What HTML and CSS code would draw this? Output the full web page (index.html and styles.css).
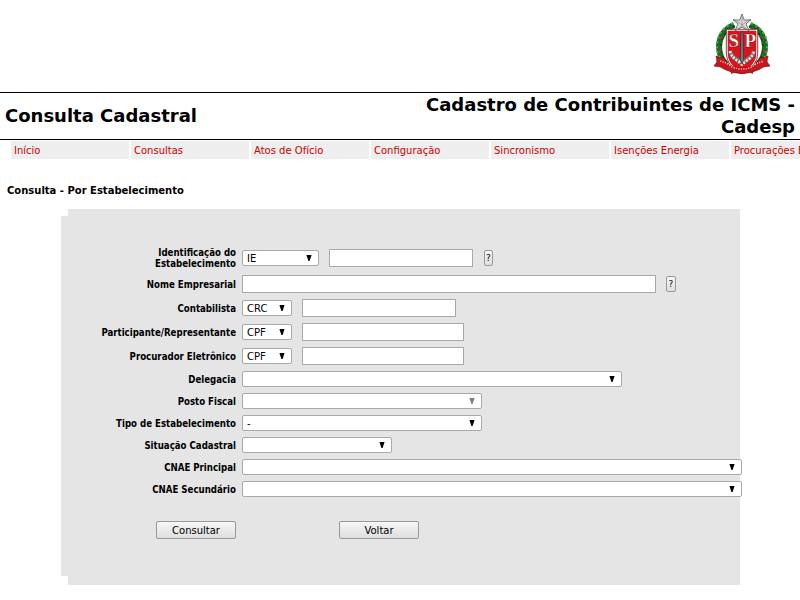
FILE: index.html
```html
<!DOCTYPE html>
<html lang="pt-BR">
<head>
<meta charset="utf-8">
<title>Consulta Cadastral</title>
<link rel="stylesheet" href="styles.css">
</head>
<body>
<header class="top">
<svg class="crest" width="60" height="66" viewBox="0 0 60 66">
<g fill="none" stroke="#176b27" stroke-width="6"><path d="M21 12Q7 18 6 33Q6 45 14 52M37 12Q51 18 52 33Q52 45 44 52"/></g>
<g fill="none" stroke="#4fae50" stroke-width="2" stroke-dasharray="2 3"><path d="M20 10Q4 17 4 33Q4 45 13 52M38 10Q54 17 54 33Q54 45 45 52"/></g>
<g fill="none" stroke="#073f16" stroke-width="1.5" stroke-dasharray="2 4"><path d="M22 13Q9 18 8 33Q8 45 15 51M36 13Q49 18 50 33Q50 45 43 51"/></g>
<g fill="#c9232b"><circle cx="8" cy="25" r="1.3"/><circle cx="50" cy="25" r="1.3"/><circle cx="7" cy="38" r="1.3"/><circle cx="51" cy="38" r="1.3"/></g>
<path d="M14 17h30v23q0 13-15 19Q14 53 14 40z" fill="#d9141c" stroke="#fff" stroke-width="1.4"/>
<path d="M13.3 16.3h31.4v24q0 13-15.7 19.5Q13.3 53 13.3 40z" fill="none" stroke="#631318" stroke-width=".8"/>
<g fill="none" stroke="#777" stroke-width="4"><path d="M17 38q2 8 12 11q10-3 12-11"/></g>
<g fill="none" stroke="#e4e4e4" stroke-width="2.4" stroke-dasharray="2 1.5"><path d="M17 38q2 9 12 11q10-2 12-11M20 44l9 8 9-8"/></g>
<path d="M28 20l1-2 1 2 .7 27L29 51l-1.7-4z" fill="#777" stroke="#222" stroke-width=".6"/>
<text class="crest-letter" x="15.6" y="34">S</text><text class="crest-letter" x="31.5" y="34">P</text>
<path d="M29 1l2.2 6.2 6.8-.5-5 4.2 3 7-7-3.8-7 3.8 3-7-5-4.2 6.8.5z" fill="#ddd" stroke="#555" stroke-width=".8"/>
<path d="M29 2v11l-6 4M29 12l7-5M29 12l6 5M29 12l-7-5" fill="none" stroke="#888" stroke-width=".7"/>
<path d="M3 43q3 2 8 2l5 7q13 6 26 0l5-7q5 0 8-2-1 4-1 6l3 4q-7 0-10 3-18 9-36 0-3-3-10-3l3-4q0-3-1-6z" fill="#c5171d" stroke="#851015" stroke-width=".8"/>
<path d="M7 48q8 2 12 6 10 4 20 0 4-4 12-6" fill="none" stroke="#ffb9b9" stroke-width="1.6" stroke-dasharray="1.2 1.3"/>
<path d="M18 60l6-3M40 60l-6-3M26 60h6" stroke="#ad2020" stroke-width="2"/>
</svg>
</header>
<div class="titlebar"><h1>Consulta Cadastral</h1><div class="system">Cadastro de Contribuintes de ICMS -<br>Cadesp</div></div>
<nav class="menu"><a>Início</a><a>Consultas</a><a>Atos de Ofício</a><a>Configuração</a><a>Sincronismo</a><a>Isenções Energia</a><a>Procurações Eletrônicas</a></nav>
<h2>Consulta - Por Estabelecimento</h2>
<main class="shadow"><form class="panel">
<div class="row first"><label>Identificação do<br>Estabelecimento</label><span class="select w77"><select><option>IE</option></select><svg viewBox="0 0 6 7"><path d="M0 0h6L3.7 7H2.3z"/></svg></span><input class="w144"><button type="button" class="help narrow">?</button></div>
<div class="row tall"><label>Nome Empresarial</label><input class="w414"><button type="button" class="help">?</button></div>
<div class="row tall"><label>Contabilista</label><span class="select w50"><select><option>CRC</option></select><svg viewBox="0 0 6 7"><path d="M0 0h6L3.7 7H2.3z"/></svg></span><input class="w154"></div>
<div class="row tall"><label>Participante/Representante</label><span class="select w50"><select><option>CPF</option></select><svg viewBox="0 0 6 7"><path d="M0 0h6L3.7 7H2.3z"/></svg></span><input class="w162"></div>
<div class="row tall"><label>Procurador Eletrônico</label><span class="select w50"><select><option>CPF</option></select><svg viewBox="0 0 6 7"><path d="M0 0h6L3.7 7H2.3z"/></svg></span><input class="w162"></div>
<div class="row"><label>Delegacia</label><span class="select w380"><select></select><svg viewBox="0 0 6 7"><path d="M0 0h6L3.7 7H2.3z"/></svg></span></div>
<div class="row"><label>Posto Fiscal</label><span class="select w240 off"><select disabled></select><svg viewBox="0 0 6 7"><path d="M0 0h6L3.7 7H2.3z"/></svg></span></div>
<div class="row"><label>Tipo de Estabelecimento</label><span class="select w240"><select><option>-</option></select><svg viewBox="0 0 6 7"><path d="M0 0h6L3.7 7H2.3z"/></svg></span></div>
<div class="row"><label>Situação Cadastral</label><span class="select w150"><select></select><svg viewBox="0 0 6 7"><path d="M0 0h6L3.7 7H2.3z"/></svg></span></div>
<div class="row"><label>CNAE Principal</label><span class="select w500"><select></select><svg viewBox="0 0 6 7"><path d="M0 0h6L3.7 7H2.3z"/></svg></span></div>
<div class="row"><label>CNAE Secundário</label><span class="select w500"><select></select><svg viewBox="0 0 6 7"><path d="M0 0h6L3.7 7H2.3z"/></svg></span></div>
<div class="actions"><button type="button">Consultar</button><button type="button">Voltar</button></div>
</form></main>
</body>
</html>
```
FILE: styles.css
```css
* { box-sizing: border-box; }
body { margin: 0; width: 800px; height: 600px; overflow: hidden; background: #fff; color: #000; font-family: "DejaVu Sans", sans-serif; font-size: 10px; }
.top { height: 92px; display: flex; justify-content: flex-end; padding: 13px 27px 0 0; }
.crest-letter { font: bold 19px "Liberation Serif", serif; fill: #fff; stroke: #650b10; stroke-width: .4px; }
.titlebar { height: 48px; border: solid #000; border-width: 1px 0; display: flex; justify-content: space-between; align-items: center; padding: 0 5px; font-size: 18px; font-weight: bold; line-height: 22px; }
h1 { margin: 0; font-size: 18px; }
.system { text-align: right; }
.menu { display: flex; gap: 2px; margin: 1px 0 0 11px; width: 789px; overflow: hidden; }
.menu a { flex: 0 0 118px; height: 18px; padding-left: 3px; line-height: 19px; background: #eee; color: #c00; white-space: nowrap; overflow: hidden; }
h2 { margin: 24px 0 0 7px; height: 26px; font-size: 10px; line-height: 15px; }
.shadow { margin: 7px 0 0 61px; width: 672px; height: 360px; background: #e5e5e5; padding-left: 7px; }
.panel { width: 672px; height: 376px; margin-top: -7px; padding-top: 37px; background: #e5e5e5; }
.shadow { display: flex; align-items: flex-start; }
.row { display: flex; align-items: center; height: 22px; }
.row.tall { height: 24px; }
.row.first { height: 24px; margin-bottom: 2px; }
label { flex: 0 0 168px; margin-right: 6px; text-align: right; font: bold 9.6px/11px "DejaVu Sans Condensed", "DejaVu Sans", sans-serif; white-space: nowrap; }
input { height: 18px; flex: none; margin: 0; padding: 1px; border: 1px solid #a9a9a9; background: #fff; }
.select { position: relative; flex: none; height: 16px; }
.select + input { margin-left: 10px; }
select { display: block; appearance: none; width: 100%; height: 16px; margin: 0; padding: 1px 0 0 4px; border: 1px solid #a9a9a9; border-radius: 2px; background: #fff; color: #000; font: 10px/13px "DejaVu Sans", sans-serif; opacity: 1; }
.select svg { position: absolute; right: 7px; top: 5px; width: 6px; height: 6px; }
.off svg { fill: #808080; }
button { height: 18px; padding: 1px 0 0; border: 1px solid #999; border-radius: 2px; background: linear-gradient(#f6f6f6, #dedede); color: #000; font: 10px/15px "DejaVu Sans", sans-serif; }
.help { width: 10px; height: 16px; margin-left: 10px; font-size: 9px; line-height: 13px; }
.help.narrow { width: 9px; margin-left: 11px; }
.actions { display: flex; gap: 103px; padding: 21px 0 0 88px; }
.actions button { width: 80px; }
.w50 { width: 50px; } .w77 { width: 77px; } .w144 { width: 144px; } .w150 { width: 150px; } .w154 { width: 154px; } .w162 { width: 162px; } .w240 { width: 240px; } .w380 { width: 380px; } .w414 { width: 414px; } .w500 { width: 500px; }
```
